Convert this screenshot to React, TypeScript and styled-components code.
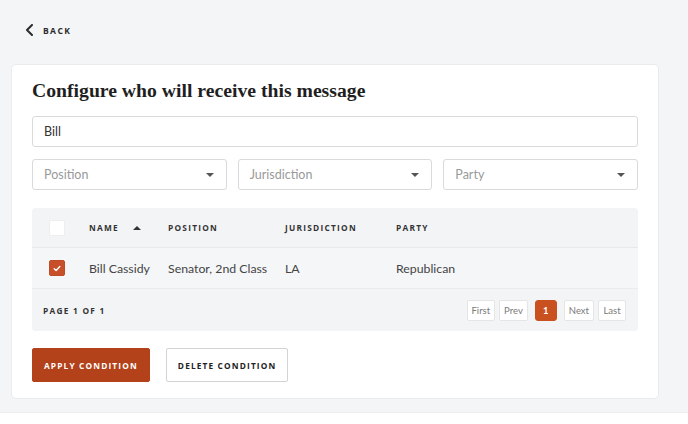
import React, {useState} from 'react';
import styled, {createGlobalStyle} from 'styled-components';

const GlobalStyle = createGlobalStyle`
  html, body {
    margin: 0;
    padding: 0;
    background: #fff;
  }
  body {
    font-family: Lato, "Open Sans", "Liberation Sans", sans-serif;
    color: #333;
  }
  * { box-sizing: border-box; }
`;

const capsFont = `"Open Sans", "Liberation Sans", sans-serif`;

const Page = styled.div`
  height: 413px;
  background: #f4f5f7;
  padding: 22px 0 0 11px;
  border-bottom: 1px solid #eceef0;
`;

const BackLink = styled.a`
  display: flex;
  align-items: center;
  gap: 9px;
  height: 16px;
  margin-left: 14px;
  font-family: ${capsFont};
  font-size: 8.5px;
  font-weight: 700;
  letter-spacing: 1.4px;
  color: #2b2b2b;
  text-decoration: none;
  cursor: pointer;
  width: max-content;
`;

const Card = styled.section`
  width: 648px;
  margin-top: 26px;
  padding: 13px 20px 16px;
  background: #fff;
  border: 1px solid #eaebed;
  border-radius: 5px;
`;

const Title = styled.h1`
  margin: 0 0 14px;
  font-family: "Liberation Serif", "DejaVu Serif", serif;
  font-weight: 700;
  font-size: 19.7px;
  line-height: 24px;
  color: #1f1f1f;
`;

const SearchInput = styled.input`
  display: block;
  width: 100%;
  height: 31px;
  padding: 0 11px;
  border: 1px solid #d9dadc;
  border-radius: 3px;
  font-family: inherit;
  font-size: 12.5px;
  color: #333;
  outline: none;
`;

const Filters = styled.div`
  display: grid;
  grid-template-columns: repeat(3, 1fr);
  gap: 11px;
  margin-top: 12px;
`;

const Select = styled.div`
  display: flex;
  align-items: center;
  justify-content: space-between;
  height: 31px;
  padding: 0 12px 0 11px;
  border: 1px solid #d9dadc;
  border-radius: 3px;
  font-size: 12.5px;
  color: #9a9a9a;
`;

const Caret = styled.span<{$up?: boolean}>`
  width: 0;
  height: 0;
  border-left: 4px solid transparent;
  border-right: 4px solid transparent;
  ${p => p.$up ? 'border-bottom: 4px solid #333;' : 'border-top: 4px solid #555;'}
`;

const Table = styled.div`
  margin-top: 18px;
  border-radius: 4px;
  overflow: hidden;
  background: #f4f5f7;
`;

const Row = styled.div<{$head?: boolean}>`
  display: grid;
  grid-template-columns: 57px 79px 117px 111px 1fr;
  align-items: center;
  height: ${p => p.$head ? '40px' : '41px'};
  background: ${p => p.$head ? '#f3f4f6' : '#f5f6f8'};
  border-bottom: 1px solid ${p => p.$head ? '#e8e9eb' : '#eaebed'};
  font-family: ${p => p.$head ? capsFont : 'inherit'};
  font-size: ${p => p.$head ? '8.3px' : '12.3px'};
  font-weight: ${p => p.$head ? 700 : 400};
  letter-spacing: ${p => p.$head ? '1.25px' : '0'};
  color: ${p => p.$head ? '#333' : '#444'};
`;

const Cell = styled.div`
  display: flex;
  align-items: center;
  gap: 14px;
  white-space: nowrap;
`;

const CheckCell = styled(Cell)`
  padding-left: 17px;
`;

const Checkbox = styled.span<{$checked?: boolean}>`
  display: flex;
  align-items: center;
  justify-content: center;
  width: 16px;
  height: 16px;
  border-radius: 2px;
  background: ${p => p.$checked ? '#c7502a' : '#fff'};
  border: 1px solid ${p => p.$checked ? '#c04c26' : '#eceef0'};
  cursor: pointer;
`;

const Footer = styled.div`
  display: flex;
  align-items: center;
  justify-content: space-between;
  height: 42px;
  padding: 0 12px 0 11px;
  background: #f3f4f6;
`;

const PageLabel = styled.span`
  font-family: ${capsFont};
  font-size: 8.3px;
  font-weight: 700;
  letter-spacing: 1.25px;
  color: #333;
`;

const Pager = styled.div`
  display: flex;
  align-items: center;
  gap: 4px;
`;

const PageButton = styled.button<{$active?: boolean}>`
  height: 21px;
  min-width: ${p => p.$active ? '22px' : '28px'};
  margin: ${p => p.$active ? '0 3px' : '0'};
  padding: 0 4px;
  border: 1px solid ${p => p.$active ? '#c9501f' : '#e4e5e7'};
  border-radius: ${p => p.$active ? '3px' : '2px'};
  background: ${p => p.$active ? '#c9501f' : '#fff'};
  color: ${p => p.$active ? '#fff' : '#7a7a7a'};
  font-family: inherit;
  font-size: 9.5px;
  font-weight: ${p => p.$active ? 700 : 400};
  cursor: pointer;
`;

const Actions = styled.div`
  display: flex;
  gap: 16px;
  margin-top: 17px;
`;

const ActionButton = styled.button<{$primary?: boolean}>`
  height: 34px;
  padding: 0 11px;
  border: 1px solid ${p => p.$primary ? '#b3421b' : '#d2d3d5'};
  border-radius: 2px;
  background: ${p => p.$primary ? '#b3421b' : '#fff'};
  color: ${p => p.$primary ? '#fff' : '#222'};
  font-family: ${capsFont};
  font-size: 8.3px;
  font-weight: 700;
  letter-spacing: 1.15px;
  cursor: pointer;
`;

const ChevronLeft = () => (
  <svg width="9" height="12" viewBox="0 0 9 12" fill="none">
    <path d="M7 1L2 6l5 5" stroke="#2b2b2b" strokeWidth="2" strokeLinecap="round" strokeLinejoin="round"/>
  </svg>
);

const Tick = () => (
  <svg width="8" height="7" viewBox="0 0 8 7" fill="none">
    <path d="M1.2 3.7l1.9 1.8L6.8 1.5" stroke="#fff" strokeWidth="1.4" strokeLinecap="round" strokeLinejoin="round"/>
  </svg>
);

const filters = ['Position', 'Jurisdiction', 'Party'];

export default function App() {
  const [query, setQuery] = useState('Bill');
  const [checked, setChecked] = useState(true);

  return (
    <>
      <GlobalStyle/>
      <Page>
        <BackLink>
          <ChevronLeft/>
          <span>BACK</span>
        </BackLink>
        <Card>
          <Title>Configure who will receive this message</Title>
          <SearchInput value={query} onChange={e => setQuery(e.target.value)}/>
          <Filters>
            {filters.map(f => (
              <Select key={f}>
                <span>{f}</span>
                <Caret/>
              </Select>
            ))}
          </Filters>
          <Table>
            <Row $head>
              <CheckCell><Checkbox/></CheckCell>
              <Cell>NAME <Caret $up/></Cell>
              <Cell>POSITION</Cell>
              <Cell>JURISDICTION</Cell>
              <Cell>PARTY</Cell>
            </Row>
            <Row>
              <CheckCell>
                <Checkbox $checked={checked} onClick={() => setChecked(!checked)}>
                  {checked && <Tick/>}
                </Checkbox>
              </CheckCell>
              <Cell>Bill Cassidy</Cell>
              <Cell>Senator, 2nd Class</Cell>
              <Cell>LA</Cell>
              <Cell>Republican</Cell>
            </Row>
            <Footer>
              <PageLabel>PAGE 1 OF 1</PageLabel>
              <Pager>
                <PageButton>First</PageButton>
                <PageButton>Prev</PageButton>
                <PageButton $active>1</PageButton>
                <PageButton>Next</PageButton>
                <PageButton>Last</PageButton>
              </Pager>
            </Footer>
          </Table>
          <Actions>
            <ActionButton $primary>APPLY CONDITION</ActionButton>
            <ActionButton>DELETE CONDITION</ActionButton>
          </Actions>
        </Card>
      </Page>
    </>
  );
}
